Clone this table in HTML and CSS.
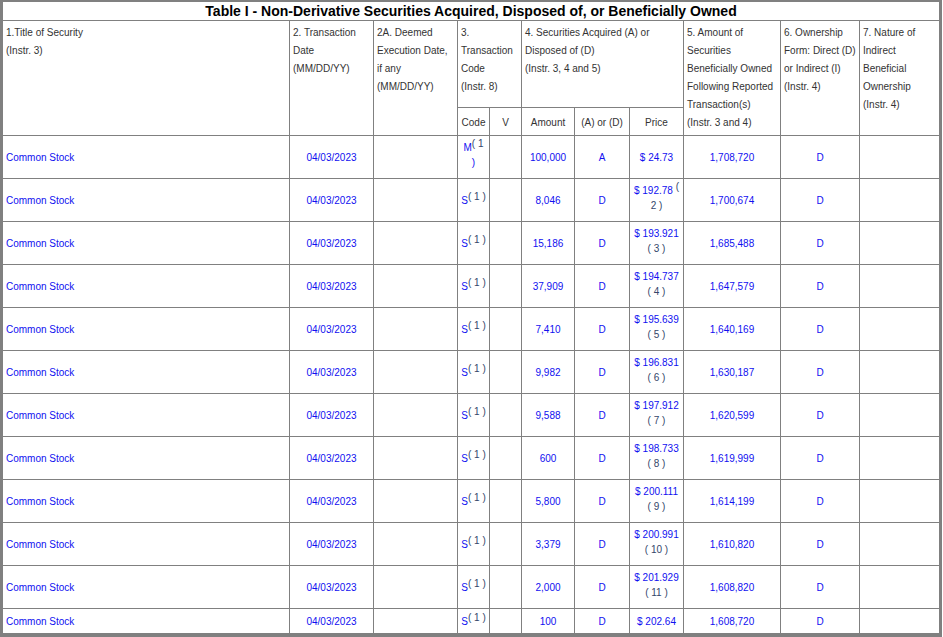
FILE: index.html
```html
<!DOCTYPE html>
<html>
<head>
<meta charset="utf-8">
<link rel="stylesheet" href="styles.css">
</head>
<body>
<div class="frame">
<table class="t1">
<colgroup>
<col class="c1"><col class="c2"><col class="c2a"><col class="c3"><col class="c3v"><col class="c4a"><col class="c4b"><col class="c4c"><col class="c5"><col class="c6"><col class="c7">
</colgroup>
<thead>
<tr class="r-title"><th colspan="11" class="title">Table I - Non-Derivative Securities Acquired, Disposed of, or Beneficially Owned</th></tr>
<tr class="r-head">
<th rowspan="2" class="hd">1.Title of Security<br>(Instr. 3)</th>
<th rowspan="2" class="hd">2. Transaction<br>Date<br>(MM/DD/YY)</th>
<th rowspan="2" class="hd">2A. Deemed<br>Execution Date,<br>if any<br>(MM/DD/YY)</th>
<th colspan="2" class="hd">3.<br>Transaction<br>Code<br>(Instr. 8)</th>
<th colspan="3" class="hd">4. Securities Acquired (A) or<br>Disposed of (D)<br>(Instr. 3, 4 and 5)</th>
<th rowspan="2" class="hd">5. Amount of<br>Securities<br>Beneficially Owned<br>Following Reported<br>Transaction(s)<br>(Instr. 3 and 4)</th>
<th rowspan="2" class="hd">6. Ownership<br>Form: Direct (D)<br>or Indirect (I)<br>(Instr. 4)</th>
<th rowspan="2" class="hd last">7. Nature of<br>Indirect<br>Beneficial<br>Ownership<br>(Instr. 4)</th>
</tr>
<tr class="r-sub">
<th class="sub">Code</th><th class="sub">V</th><th class="sub">Amount</th><th class="sub">(A) or (D)</th><th class="sub">Price</th>
</tr>
</thead>
<tbody>
<tr class="r-data">
<td class="name">Common Stock</td><td>04/03/2023</td><td></td>
<td class="lift">M<span class="fn">( 1</span><br>)</td><td></td>
<td>100,000</td><td>A</td><td>$ 24.73</td><td>1,708,720</td><td>D</td><td class="last"></td>
</tr>
<tr class="r-data">
<td class="name">Common Stock</td><td>04/03/2023</td><td></td>
<td>S<span class="fn">( 1 )</span></td><td></td>
<td>8,046</td><td>D</td><td class="lift">$ 192.78 <span class="fn">(</span><br><span class="fn2">2 )</span></td><td>1,700,674</td><td>D</td><td class="last"></td>
</tr>
<tr class="r-data">
<td class="name">Common Stock</td><td>04/03/2023</td><td></td>
<td>S<span class="fn">( 1 )</span></td><td></td>
<td>15,186</td><td>D</td><td class="lift">$ 193.921<br><span class="fn2">( 3 )</span></td><td>1,685,488</td><td>D</td><td class="last"></td>
</tr>
<tr class="r-data">
<td class="name">Common Stock</td><td>04/03/2023</td><td></td>
<td>S<span class="fn">( 1 )</span></td><td></td>
<td>37,909</td><td>D</td><td class="lift">$ 194.737<br><span class="fn2">( 4 )</span></td><td>1,647,579</td><td>D</td><td class="last"></td>
</tr>
<tr class="r-data">
<td class="name">Common Stock</td><td>04/03/2023</td><td></td>
<td>S<span class="fn">( 1 )</span></td><td></td>
<td>7,410</td><td>D</td><td class="lift">$ 195.639<br><span class="fn2">( 5 )</span></td><td>1,640,169</td><td>D</td><td class="last"></td>
</tr>
<tr class="r-data">
<td class="name">Common Stock</td><td>04/03/2023</td><td></td>
<td>S<span class="fn">( 1 )</span></td><td></td>
<td>9,982</td><td>D</td><td class="lift">$ 196.831<br><span class="fn2">( 6 )</span></td><td>1,630,187</td><td>D</td><td class="last"></td>
</tr>
<tr class="r-data">
<td class="name">Common Stock</td><td>04/03/2023</td><td></td>
<td>S<span class="fn">( 1 )</span></td><td></td>
<td>9,588</td><td>D</td><td class="lift">$ 197.912<br><span class="fn2">( 7 )</span></td><td>1,620,599</td><td>D</td><td class="last"></td>
</tr>
<tr class="r-data">
<td class="name">Common Stock</td><td>04/03/2023</td><td></td>
<td>S<span class="fn">( 1 )</span></td><td></td>
<td>600</td><td>D</td><td class="lift">$ 198.733<br><span class="fn2">( 8 )</span></td><td>1,619,999</td><td>D</td><td class="last"></td>
</tr>
<tr class="r-data">
<td class="name">Common Stock</td><td>04/03/2023</td><td></td>
<td>S<span class="fn">( 1 )</span></td><td></td>
<td>5,800</td><td>D</td><td class="lift">$ 200.111<br><span class="fn2">( 9 )</span></td><td>1,614,199</td><td>D</td><td class="last"></td>
</tr>
<tr class="r-data">
<td class="name">Common Stock</td><td>04/03/2023</td><td></td>
<td>S<span class="fn">( 1 )</span></td><td></td>
<td>3,379</td><td>D</td><td class="lift">$ 200.991<br><span class="fn2">( 10 )</span></td><td>1,610,820</td><td>D</td><td class="last"></td>
</tr>
<tr class="r-data">
<td class="name">Common Stock</td><td>04/03/2023</td><td></td>
<td>S<span class="fn">( 1 )</span></td><td></td>
<td>2,000</td><td>D</td><td class="lift">$ 201.929<br><span class="fn2">( 11 )</span></td><td>1,608,820</td><td>D</td><td class="last"></td>
</tr>
<tr class="r-data r-end">
<td class="name">Common Stock</td><td>04/03/2023</td><td></td>
<td>S<span class="fn">( 1 )</span></td><td></td>
<td>100</td><td>D</td><td>$ 202.64</td><td>1,608,720</td><td>D</td><td class="last"></td>
</tr>
</tbody>
</table>
</div>
</body>
</html>
```
FILE: styles.css
```css
html, body {
  margin: 0;
  padding: 0;
  background: #ffffff;
}
body {
  font-family: "Liberation Sans", Arial, sans-serif;
  font-size: 10px;
}
.frame {
  width: 936px;
  border-style: solid;
  border-color: #808080;
  border-width: 2px 3px 4px 3px;
}
.t1 {
  width: 936px;
  table-layout: fixed;
  border-collapse: separate;
  border-spacing: 0;
}
.c1 { width: 287px; }
.c2 { width: 84px; }
.c2a { width: 84px; }
.c3 { width: 32px; }
.c3v { width: 32px; }
.c4a { width: 53px; }
.c4b { width: 55px; }
.c4c { width: 54px; }
.c5 { width: 97px; }
.c6 { width: 79px; }
.c7 { width: 79px; }

.t1 th, .t1 td {
  box-sizing: border-box;
  border-right: 1px solid #808080;
  border-bottom: 1px solid #808080;
  padding: 0 3px;
  font-weight: normal;
}
.t1 .last { border-right: none; }
.r-end td { border-bottom: none; }

.title {
  height: 19px;
  font-size: 14px;
  font-weight: bold !important;
  color: #000;
  text-align: center;
  vertical-align: middle;
  line-height: 16px;
  border-right: none !important;
}
.r-head { height: 87px; }
.hd {
  color: #333;
  text-align: left;
  vertical-align: top;
  line-height: 18px;
  padding-top: 3px !important;
  white-space: nowrap;
}
.r-sub { height: 28px; }
.sub {
  color: #333;
  text-align: center;
  vertical-align: middle;
  line-height: 18px;
  padding-top: 3px !important;
  white-space: nowrap;
}
.r-data { height: 43px; }
.r-end { height: 24px; }
.r-data td {
  color: #1010f0;
  text-align: center;
  vertical-align: middle;
  line-height: 15px;
  white-space: nowrap;
}
.r-data td.name { text-align: left; }
.r-data td.lift { padding-bottom: 4px; }
.fn {
  position: relative;
  top: -4px;
  color: #34466a;
}
.fn2 {
  color: #34466a;
}
```
